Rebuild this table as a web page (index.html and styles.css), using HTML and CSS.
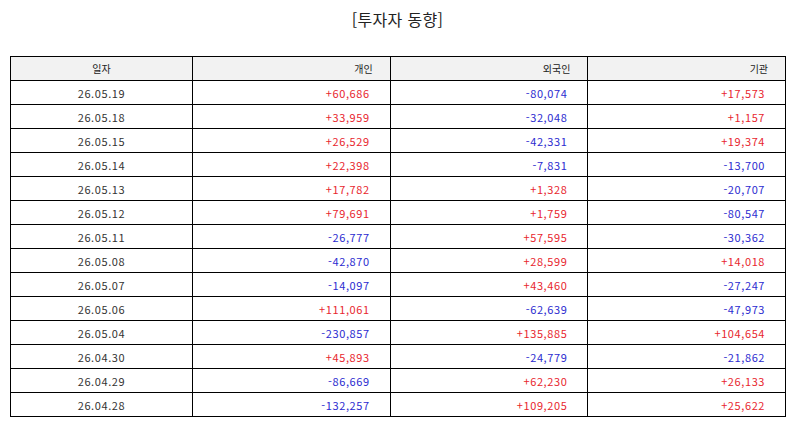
FILE: index.html
```html
<!DOCTYPE html>
<html lang="ko">
<head>
<meta charset="utf-8">
<title>투자자 동향</title>
<link rel="stylesheet" href="styles.css">
</head>
<body>
<div class="page">
  <h1 class="title">[투자자 동향]</h1>
  <table class="grid">
    <colgroup>
      <col class="c-date"><col class="c-num"><col class="c-num"><col class="c-num">
    </colgroup>
    <thead>
      <tr><th class="center">일자</th><th>개인</th><th>외국인</th><th>기관</th></tr>
    </thead>
    <tbody>
      <tr><td class="center">26.05.19</td><td class="up">+60,686</td><td class="down">-80,074</td><td class="up">+17,573</td></tr>
      <tr><td class="center">26.05.18</td><td class="up">+33,959</td><td class="down">-32,048</td><td class="up">+1,157</td></tr>
      <tr><td class="center">26.05.15</td><td class="up">+26,529</td><td class="down">-42,331</td><td class="up">+19,374</td></tr>
      <tr><td class="center">26.05.14</td><td class="up">+22,398</td><td class="down">-7,831</td><td class="down">-13,700</td></tr>
      <tr><td class="center">26.05.13</td><td class="up">+17,782</td><td class="up">+1,328</td><td class="down">-20,707</td></tr>
      <tr><td class="center">26.05.12</td><td class="up">+79,691</td><td class="up">+1,759</td><td class="down">-80,547</td></tr>
      <tr><td class="center">26.05.11</td><td class="down">-26,777</td><td class="up">+57,595</td><td class="down">-30,362</td></tr>
      <tr><td class="center">26.05.08</td><td class="down">-42,870</td><td class="up">+28,599</td><td class="up">+14,018</td></tr>
      <tr><td class="center">26.05.07</td><td class="down">-14,097</td><td class="up">+43,460</td><td class="down">-27,247</td></tr>
      <tr><td class="center">26.05.06</td><td class="up">+111,061</td><td class="down">-62,639</td><td class="down">-47,973</td></tr>
      <tr><td class="center">26.05.04</td><td class="down">-230,857</td><td class="up">+135,885</td><td class="up">+104,654</td></tr>
      <tr><td class="center">26.04.30</td><td class="up">+45,893</td><td class="down">-24,779</td><td class="down">-21,862</td></tr>
      <tr><td class="center">26.04.29</td><td class="down">-86,669</td><td class="up">+62,230</td><td class="up">+26,133</td></tr>
      <tr><td class="center">26.04.28</td><td class="down">-132,257</td><td class="up">+109,205</td><td class="up">+25,622</td></tr>
    </tbody>
  </table>
</div>
</body>
</html>
```
FILE: styles.css
```css
html, body {
  margin: 0;
  padding: 0;
  background: #ffffff;
}
body {
  font-family: "Noto Sans CJK KR", "Noto Sans", sans-serif;
  color: #333333;
}
.page {
  padding: 6px 9px 0 10px;
}
.title {
  margin: 0;
  height: 50px;
  padding-top: 2px;
  box-sizing: border-box;
  text-align: center;
  font-size: 16px;
  font-weight: 400;
  line-height: 22px;
  letter-spacing: 0.3px;
  color: #222222;
}
.grid {
  width: 775px;
  border-collapse: collapse;
  table-layout: fixed;
  font-size: 11px;
}
.c-date { width: 182px; }
.c-num { width: 197.7px; }
.grid th, .grid td {
  border: 1px solid #000000;
  height: 23px;
  padding: 0 20px 0 4px;
  text-align: right;
  line-height: 14px;
  white-space: nowrap;
}
.grid td {
  letter-spacing: 0.6px;
}
.grid th {
  background: #f2f2f2;
  font-weight: 400;
  font-size: 10px;
  color: #222222;
  padding-right: 17px;
}
.grid .center {
  text-align: center;
  padding: 0;
}
.up { color: #e8262e; }
.down { color: #2b2bd0; }
```
